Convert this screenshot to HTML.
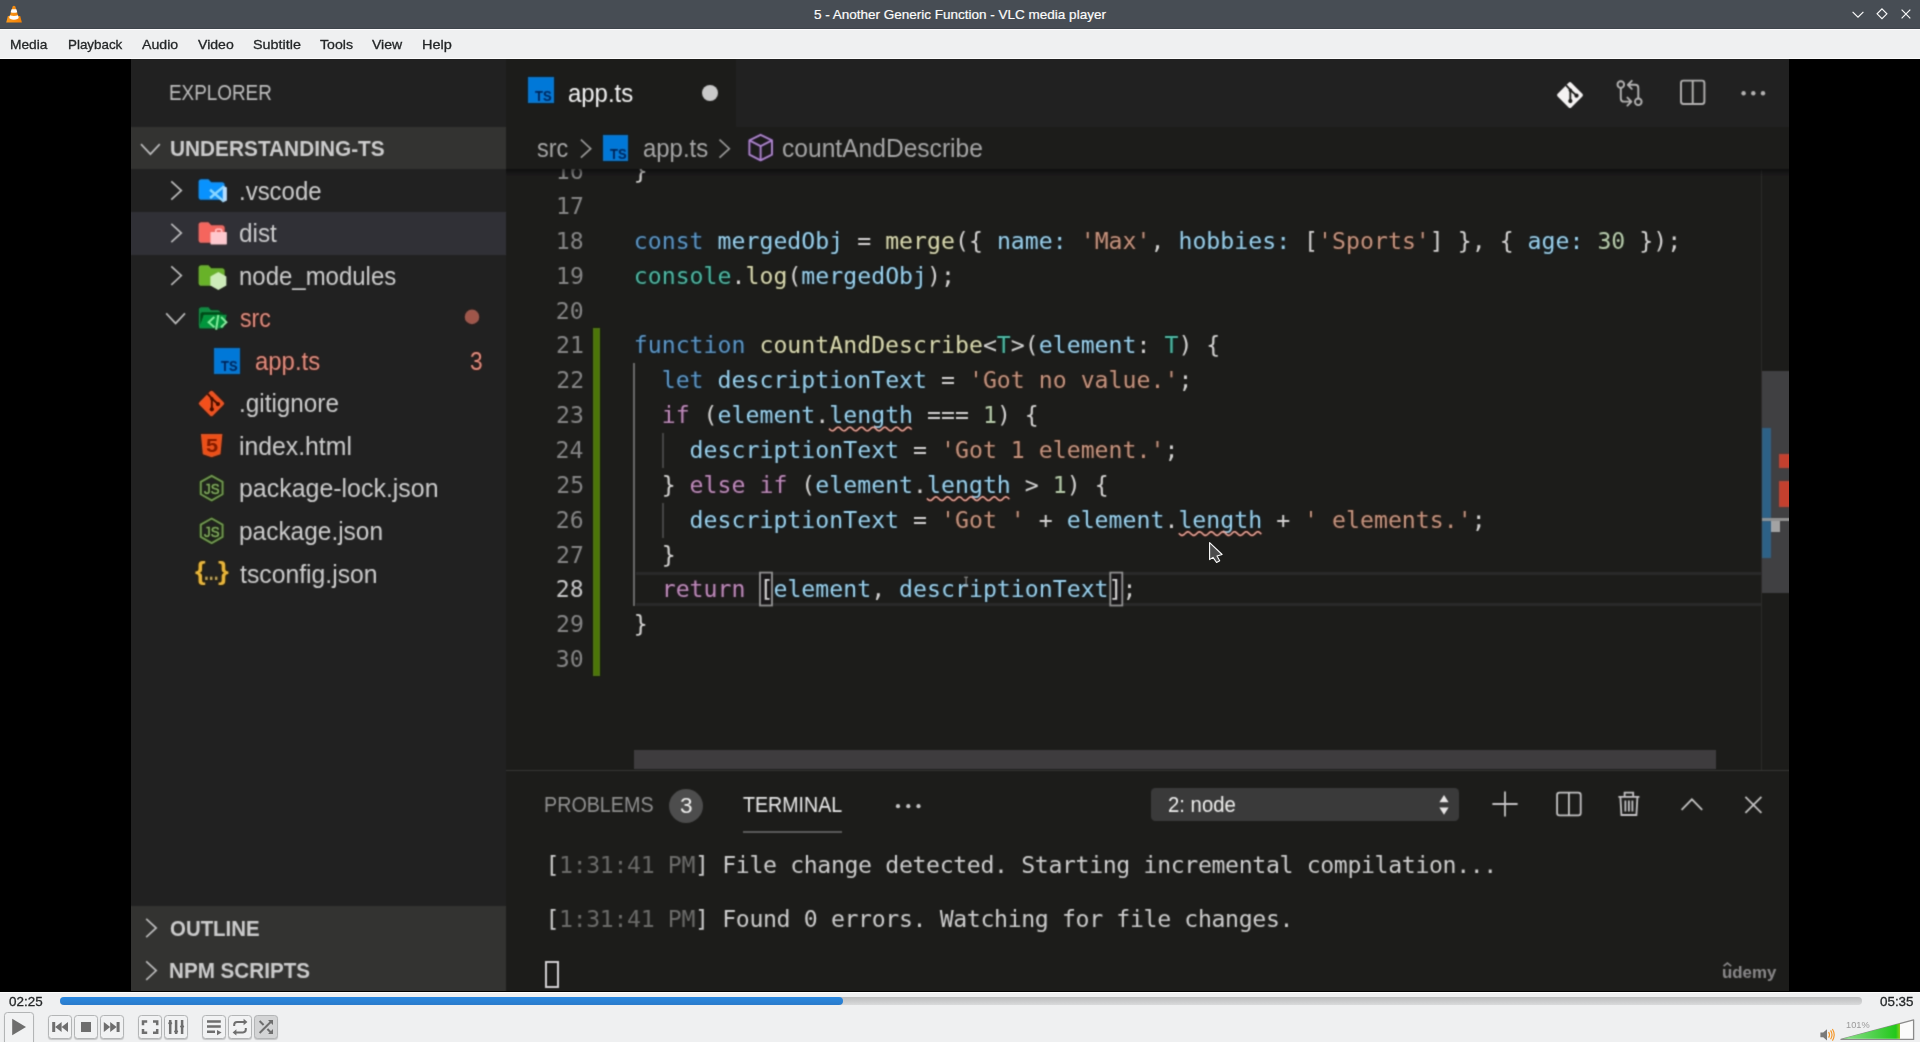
<!DOCTYPE html>
<html lang="en">
<head>
<meta charset="utf-8">
<title>5 - Another Generic Function - VLC media player</title>
<style>
*{box-sizing:border-box;margin:0;padding:0}
html,body{width:1920px;height:1042px;overflow:hidden;background:#000}
body{position:relative;font-family:"Liberation Sans",sans-serif}
.a{position:absolute;white-space:pre;line-height:normal;transform-origin:0 0}
svg{position:absolute;overflow:visible}
.m{font-family:"DejaVu Sans Mono","Liberation Mono",monospace}
.k{color:#5298d2}.c{color:#c586c0}.v{color:#92d3f4}.f{color:#dcdcaa}.s{color:#ce9178}.n{color:#b5cea8}.t{color:#3fbfa6}
.d{color:#6b6b6b}
#vs{filter:url(#vb)}
</style>
</head>
<body>
<!-- VLC title bar -->
<div class="a" style="left:0px;top:0px;width:1920px;height:29px;background:#474d54;border-bottom:1px solid #3f454c"></div>
<svg style="left:0px;top:0px" width="30" height="29" viewBox="0 0 30 29"><defs><linearGradient id="cg" x1="0" x2="1" y1="0" y2="0"><stop offset="0" stop-color="#fb9a1c"/><stop offset="1" stop-color="#f17e04"/></linearGradient></defs><path d="M12.7 6.3 Q13.95 5.1 15.2 6.3 L18.2 16.1 H20.2 L21.9 22.5 H6.2 L7.9 16.1 H9.8 Z" fill="url(#cg)"/><path d="M11.6 9.3 H16.3 L17.3 12.2 Q13.95 13.300 10.600 12.200 Z" fill="#fbfbfb"/><path d="M9.900 15.300 Q13.950 16.800 18 15.300 L18.700 17.500 Q18.300 19.600 13.950 19.700 Q9.600 19.600 9.200 17.500 Z" fill="#fbfbfb"/></svg>
<div class="a" style="left:814.0px;top:7.2px;font-size:13.5px;color:#fcfcfc;-webkit-text-stroke:.2px #fcfcfc;">5 - Another Generic Function - VLC media player</div>
<svg style="left:1848px;top:5px" width="68" height="18" viewBox="1848 5 68 18"><g fill="none" stroke="#fcfcfc" stroke-width="1.15"><path d="M1852.6 11.8 L1858 17.1 L1863.4 11.8"/><path d="M1882 8.9 L1886.9 13.8 L1882 18.7 L1877.1 13.8 Z"/><path d="M1901.6 9.6 L1910.3 18.3 M1910.3 9.6 L1901.6 18.3"/></g></svg>
<!-- VLC menu bar -->
<div class="a" style="left:0px;top:29px;width:1920px;height:30px;background:#eff0f1;border-top:1px solid #fcfcfc;border-bottom:1px solid #fcfcfc"></div>
<div class="a" style="left:9.5px;top:37.4px;font-size:13.5px;color:#232627;transform:scaleX(1.0154);-webkit-text-stroke:.3px #232627;">Media</div>
<div class="a" style="left:67.5px;top:37.4px;font-size:13.5px;color:#232627;transform:scaleX(0.9916);-webkit-text-stroke:.3px #232627;">Playback</div>
<div class="a" style="left:142.0px;top:37.4px;font-size:13.5px;color:#232627;transform:scaleX(1.0471);-webkit-text-stroke:.3px #232627;">Audio</div>
<div class="a" style="left:198.0px;top:37.4px;font-size:13.5px;color:#232627;transform:scaleX(1.0430);-webkit-text-stroke:.3px #232627;">Video</div>
<div class="a" style="left:252.7px;top:37.4px;font-size:13.5px;color:#232627;transform:scaleX(1.0629);-webkit-text-stroke:.3px #232627;">Subtitle</div>
<div class="a" style="left:319.7px;top:37.4px;font-size:13.5px;color:#232627;transform:scaleX(1.0472);-webkit-text-stroke:.3px #232627;">Tools</div>
<div class="a" style="left:372.0px;top:37.4px;font-size:13.5px;color:#232627;transform:scaleX(1.0414);-webkit-text-stroke:.3px #232627;">View</div>
<div class="a" style="left:421.7px;top:37.4px;font-size:13.5px;color:#232627;transform:scaleX(1.0743);-webkit-text-stroke:.3px #232627;">Help</div>
<!-- video frame (VS Code recording) -->
<svg width="0" height="0" style="left:0;top:0"><filter id="vb" x="0" y="0" width="100%" height="100%" color-interpolation-filters="sRGB"><feColorMatrix in="SourceGraphic" type="matrix" values="0.299 0.587 0.114 0 0 0.299 0.587 0.114 0 0 0.299 0.587 0.114 0 0 0 0 0 1 0" result="y"/><feConvolveMatrix in="y" order="3" kernelMatrix="1 3 1 3 9 3 1 3 1" edgeMode="duplicate" preserveAlpha="true" result="yb"/><feColorMatrix in="SourceGraphic" type="matrix" values="0.3505 -0.2935 -0.0570 0 0.5 -0.1495 0.2065 -0.0570 0 0.5 -0.1495 -0.2935 0.4430 0 0.5 0 0 0 1 0" result="c"/><feConvolveMatrix in="c" order="5" kernelMatrix="1 4 6 4 1 4 16 24 16 4 6 24 36 24 6 4 16 24 16 4 1 4 6 4 1" edgeMode="duplicate" preserveAlpha="true" result="cb"/><feComposite in="yb" in2="cb" operator="arithmetic" k1="0" k2="1" k3="2" k4="-1.00392"/></filter></svg>
<div id="vs" class="a" style="left:131px;top:59px;width:1658px;height:932px;background:#1c1c1c;overflow:hidden">
<div class="a" style="left:-131px;top:-59px;width:1920px;height:1042px">
<!-- sidebar -->
<div class="a" style="left:131px;top:59px;width:375px;height:933px;background:#212121;"></div>
<div class="a" style="left:169.3px;top:81.2px;font-size:21.3px;color:#bdbdbd;transform:scaleX(0.8865);">EXPLORER</div>
<div class="a" style="left:131px;top:127px;width:375px;height:42.2px;background:#333333;"></div>
<svg style="left:0;top:0" width="1" height="1"><path d="M141.0 144.2 L150.4 154.2 L159.8 144.2" fill="none" stroke="#bcbcbc" stroke-width="1.7"/></svg>
<div class="a" style="left:169.8px;top:136.6px;font-size:21.3px;font-weight:bold;color:#cccccc;transform:scaleX(0.9775);">UNDERSTANDING-TS</div>
<div class="a" style="left:131px;top:212px;width:375px;height:43.2px;background:#313137;"></div>
<svg style="left:0;top:0" width="1" height="1"><path d="M171.3 181.3 L181.3 190.5 L171.3 199.7" fill="none" stroke="#bcbcbc" stroke-width="1.7"/></svg>
<svg style="left:196.2px;top:174.475px" width="31" height="31" viewBox="0 0 24 24"><path d="M9.6 4H4c-1.1 0-2 .9-2 2v12c0 1.1.9 2 2 2h16.2c1.1 0 2-.9 2-2V8.3c0-1.1-.9-2-2-2h-8.4z" fill="#0a93ff"/><path d="M20.7 8.9 L23.9 10.4 V20.6 L20.7 22.1 Z" fill="#b9dcff"/><path d="M21.4 9.8 L10.9 18.6 M21.4 21.2 L10.9 12.2" fill="none" stroke="#8fd6ff" stroke-width="1.9"/></svg>
<div class="a" style="left:239.1px;top:176.5px;font-size:25.2px;color:#cccccc;transform:scaleX(0.9509);">.vscode</div>
<svg style="left:0;top:0" width="1" height="1"><path d="M171.3 223.8 L181.3 233.0 L171.3 242.2" fill="none" stroke="#bcbcbc" stroke-width="1.7"/></svg>
<svg style="left:196.2px;top:217.025px" width="31" height="31" viewBox="0 0 24 24"><path d="M9.6 4H4c-1.1 0-2 .9-2 2v12c0 1.1.9 2 2 2h16.2c1.1 0 2-.9 2-2V8.3c0-1.1-.9-2-2-2h-8.4z" fill="#f7675f"/><rect x="11.2" y="11.7" width="12.7" height="9.6" rx=".5" fill="#ffc9ce"/><path d="M15.3 11.9 V10.6 c0 -.7 .4 -1.100 1.100 -1.100 h2.400 c.7 0 1.100 .4 1.100 1.100 V11.900" fill="none" stroke="#ffc9ce" stroke-width="1.300"/></svg>
<div class="a" style="left:239.2px;top:219.1px;font-size:25.2px;color:#cccccc;transform:scaleX(0.9658);">dist</div>
<svg style="left:0;top:0" width="1" height="1"><path d="M171.3 266.4 L181.3 275.6 L171.3 284.8" fill="none" stroke="#bcbcbc" stroke-width="1.7"/></svg>
<svg style="left:196.2px;top:259.575px" width="31" height="31" viewBox="0 0 24 24"><path d="M9.6 4H4c-1.1 0-2 .9-2 2v12c0 1.1.9 2 2 2h16.2c1.1 0 2-.9 2-2V8.3c0-1.1-.9-2-2-2h-8.4z" fill="#6ab42a"/><path d="M17.3 9.2 L23.5 12.7 V19.8 L17.300 23.300 L11.100 19.800 V12.700 Z" fill="#ceebba"/></svg>
<div class="a" style="left:238.5px;top:261.6px;font-size:25.2px;color:#cccccc;transform:scaleX(0.9514);">node_modules</div>
<svg style="left:0;top:0" width="1" height="1"><path d="M166.2 313.4 L175.6 323.4 L185.0 313.4" fill="none" stroke="#bcbcbc" stroke-width="1.7"/></svg>
<svg style="left:196.2px;top:302.075px" width="31" height="31" viewBox="0 0 24 24"><path d="M9.6 4H4.2c-1.1 0-2 .9-2 2v12.400c0 1.100 .9 2 2 2h14.500 V8.300 c0-1.100-.9-2-2-2 h-5.100z" fill="#0c8d41"/><path d="M5 8 H20.700 V10 H6.200 L3.400 18 V9.600 c0 -.9 .7 -1.600 1.600 -1.600z" fill="#04481a"/><path d="M6 9.900 H23.800 L21.500 19.200 c-.2 .8 -.8 1.200 -1.600 1.200 H2.400 Z" fill="#02973d"/><g fill="none" stroke="#86e89a" stroke-width="1.600"><path d="M14.200 11.600 L9.800 15.600 L14.200 19.500"/><path d="M19.400 11.600 L23.500 15.600 L19.400 19.500"/><path d="M17.300 9.900 L15.600 21.500"/></g></svg>
<div class="a" style="left:239.5px;top:304.2px;font-size:25.2px;color:#f08675;transform:scaleX(0.9178);">src</div>
<svg style="left:0;top:0" width="1" height="1"><circle cx="472" cy="316.9" r="7.3" fill="#a1574b"/></svg>
<div class="a" style="left:214.4px;top:347.65px;width:25.5px;height:26.4px;background:#0079d8;"></div><div class="a" style="left:221.3px;top:358.1px;font-size:14.4px;font-weight:bold;color:#04234f;transform:scale(0.8971,0.9659);">TS</div>
<div class="a" style="left:254.7px;top:346.7px;font-size:25.2px;color:#f08675;transform:scaleX(0.9498);">app.ts</div>
<div class="a" style="left:469.9px;top:346.7px;font-size:25.2px;color:#f08675;transform:scaleX(0.9000);">3</div>
<svg style="left:0;top:0" width="1" height="1"><g transform="translate(211.5 403.5) scale(1.108)"><rect x="-8.6" y="-8.6" width="17.2" height="17.2" rx="1.7" transform="rotate(45)" fill="#f4501c"/><g fill="#3a1206"><circle cx="0.3" cy="-4.3" r="1.5"/><circle cx="0.3" cy="5.3" r="1.9"/><circle cx="5.8" cy="0.5" r="1.9"/></g><path d="M-3.6 -8.8 L0.300 -4.600 V5.300 M0.500 -4.300 L5.800 0.500" fill="none" stroke="#3a1206" stroke-width="1.700"/></g></svg>
<div class="a" style="left:239.2px;top:389.3px;font-size:25.2px;color:#cccccc;transform:scaleX(0.9646);">.gitignore</div>
<svg style="left:0;top:0" width="1" height="1"><path d="M200.900 433.900 H222.400 L220.500 454.300 L211.650 457.300 L202.800 454.300 Z" fill="#ee5018"/></svg>
<div class="a" style="left:206.0px;top:435.9px;font-size:18px;font-weight:bold;color:#7c1c02;transform:scale(1.2111,1.0039);">5</div>
<div class="a" style="left:238.5px;top:431.8px;font-size:25.2px;color:#cccccc;transform:scaleX(0.9834);">index.html</div>
<svg style="left:0;top:0" width="1" height="1"><path d="M211.65 475.8 L222.55 481.95000000000005 V494.25 L211.65 500.40000000000003 L200.75 494.25 V481.95000000000005 Z" fill="none" stroke="#6c9f43" stroke-width="2" stroke-linejoin="round"/></svg><div class="a" style="left:204.2px;top:480.3px;font-size:15px;color:#7db54e;transform:scale(0.8909,1.0233);-webkit-text-stroke:.45px #7db54e;">JS</div>
<div class="a" style="left:238.5px;top:474.4px;font-size:25.2px;color:#cccccc;transform:scaleX(0.9897);">package-lock.json</div>
<svg style="left:0;top:0" width="1" height="1"><path d="M211.65 518.5 L222.55 524.65 V536.9499999999999 L211.65 543.0999999999999 L200.75 536.9499999999999 V524.65 Z" fill="none" stroke="#6c9f43" stroke-width="2" stroke-linejoin="round"/></svg><div class="a" style="left:204.2px;top:523.0px;font-size:15px;color:#7db54e;transform:scale(0.8909,1.0233);-webkit-text-stroke:.45px #7db54e;">JS</div>
<div class="a" style="left:238.5px;top:516.9px;font-size:25.2px;color:#cccccc;transform:scaleX(0.9703);">package.json</div>
<div class="a" style="left:195.3px;top:557.2px;font-size:25px;font-weight:bold;color:#ecb52c;transform:scale(1.1086,1.0000);">{</div>
<div class="a" style="left:217.5px;top:557.2px;font-size:25px;font-weight:bold;color:#ecb52c;transform:scale(1.1086,1.0000);">}</div>
<div class="a" style="left:204.3px;top:559.3px;font-size:14px;font-weight:bold;color:#c3a042;transform:scale(1.2513,1.6000);">...</div>
<div class="a" style="left:240.0px;top:559.5px;font-size:25.2px;color:#cccccc;transform:scaleX(0.9830);">tsconfig.json</div>
<div class="a" style="left:131px;top:906.3px;width:375px;height:86px;background:#333333;"></div>
<svg style="left:0;top:0" width="1" height="1"><path d="M146.2 918.8 L156.2 928.0 L146.2 937.2" fill="none" stroke="#bcbcbc" stroke-width="1.7"/></svg>
<div class="a" style="left:169.9px;top:916.6px;font-size:21.3px;font-weight:bold;color:#cccccc;transform:scaleX(0.9587);">OUTLINE</div>
<svg style="left:0;top:0" width="1" height="1"><path d="M146.2 961.4 L156.2 970.6 L146.2 979.8" fill="none" stroke="#bcbcbc" stroke-width="1.7"/></svg>
<div class="a" style="left:169.1px;top:959.2px;font-size:21.3px;font-weight:bold;color:#cccccc;transform:scaleX(0.9689);">NPM SCRIPTS</div>
<!-- editor: code -->
<div class="a" style="left:593.4px;top:327.6px;width:6.3px;height:348px;background:#4d7709;"></div>
<div class="a" style="left:633.3px;top:362.6px;width:1.9px;height:243.6px;background:#6a6a6a;"></div>
<div class="a" style="left:662px;top:433.1px;width:1.7px;height:34.85px;background:#454545;"></div>
<div class="a" style="left:662px;top:503.1px;width:1.7px;height:34.85px;background:#454545;"></div>
<div class="a" style="left:636px;top:572.3px;width:1126px;height:2.4px;background:#292929;"></div>
<div class="a" style="left:636px;top:603.4px;width:1126px;height:2.4px;background:#292929;"></div>
<svg style="left:0;top:0" width="1" height="1"><rect x="760.0" y="572.6" width="12.0" height="32.9" fill="#191919" stroke="#949494" stroke-width="1.8"/></svg>
<svg style="left:0;top:0" width="1" height="1"><rect x="1110.3000000000002" y="572.6" width="12.0" height="32.9" fill="#191919" stroke="#949494" stroke-width="1.8"/></svg>
<div class="a m" style="left:555.70px;top:157.30px;font-size:23.17px;color:#858585">16</div>
<div class="a m" style="left:555.95px;top:192.30px;font-size:23.17px;color:#858585">17</div>
<div class="a m" style="left:555.70px;top:227.30px;font-size:23.17px;color:#858585">18</div>
<div class="a m" style="left:555.95px;top:262.30px;font-size:23.17px;color:#858585">19</div>
<div class="a m" style="left:555.70px;top:297.30px;font-size:23.17px;color:#858585">20</div>
<div class="a m" style="left:555.95px;top:331.30px;font-size:23.17px;color:#858585">21</div>
<div class="a m" style="left:556.20px;top:366.30px;font-size:23.17px;color:#858585">22</div>
<div class="a m" style="left:555.95px;top:401.30px;font-size:23.17px;color:#858585">23</div>
<div class="a m" style="left:555.45px;top:436.30px;font-size:23.17px;color:#858585">24</div>
<div class="a m" style="left:556.20px;top:471.30px;font-size:23.17px;color:#858585">25</div>
<div class="a m" style="left:555.70px;top:506.30px;font-size:23.17px;color:#858585">26</div>
<div class="a m" style="left:555.95px;top:541.30px;font-size:23.17px;color:#858585">27</div>
<div class="a m" style="left:555.70px;top:575.30px;font-size:23.17px;color:#c6c6c6">28</div>
<div class="a m" style="left:555.95px;top:610.30px;font-size:23.17px;color:#858585">29</div>
<div class="a m" style="left:555.70px;top:645.30px;font-size:23.17px;color:#858585">30</div>
<div class="a m" style="left:633.75px;top:157.30px;font-size:23.17px;letter-spacing:0.023px;color:#d4d4d4">}</div>
<div class="a m" style="left:633.75px;top:227.30px;font-size:23.17px;letter-spacing:0.023px;color:#d4d4d4"><span class="k">const</span> <span class="v">mergedObj</span> = <span class="f">merge</span>({ <span class="v">name:</span> <span class="s">'Max'</span>, <span class="v">hobbies:</span> [<span class="s">'Sports'</span>] }, { <span class="v">age:</span> <span class="n">30</span> });</div>
<div class="a m" style="left:633.75px;top:262.30px;font-size:23.17px;letter-spacing:0.023px;color:#d4d4d4"><span class="t">console</span>.<span class="f">log</span>(<span class="v">mergedObj</span>);</div>
<div class="a m" style="left:633.75px;top:331.30px;font-size:23.17px;letter-spacing:0.023px;color:#d4d4d4"><span class="k">function</span> <span class="f">countAndDescribe</span>&lt;<span class="t">T</span>&gt;(<span class="v">element</span>: <span class="t">T</span>) {</div>
<div class="a m" style="left:633.75px;top:366.30px;font-size:23.17px;letter-spacing:0.023px;color:#d4d4d4">  <span class="k">let</span> <span class="v">descriptionText</span> = <span class="s">'Got no value.'</span>;</div>
<div class="a m" style="left:633.75px;top:401.30px;font-size:23.17px;letter-spacing:0.023px;color:#d4d4d4">  <span class="c">if</span> (<span class="v">element</span>.<span class="v">length</span> === <span class="n">1</span>) {</div>
<div class="a m" style="left:633.75px;top:436.30px;font-size:23.17px;letter-spacing:0.023px;color:#d4d4d4">    <span class="v">descriptionText</span> = <span class="s">'Got 1 element.'</span>;</div>
<div class="a m" style="left:633.75px;top:471.30px;font-size:23.17px;letter-spacing:0.023px;color:#d4d4d4">  } <span class="c">else</span> <span class="c">if</span> (<span class="v">element</span>.<span class="v">length</span> &gt; <span class="n">1</span>) {</div>
<div class="a m" style="left:633.75px;top:506.30px;font-size:23.17px;letter-spacing:0.023px;color:#d4d4d4">    <span class="v">descriptionText</span> = <span class="s">'Got '</span> + <span class="v">element</span>.<span class="v">length</span> + <span class="s">' elements.'</span>;</div>
<div class="a m" style="left:633.75px;top:541.30px;font-size:23.17px;letter-spacing:0.023px;color:#d4d4d4">  }</div>
<div class="a m" style="left:633.75px;top:575.30px;font-size:23.17px;letter-spacing:0.023px;color:#d4d4d4">  <span class="c">return</span> [<span class="v">element</span>, <span class="v">descriptionText</span>];</div>
<div class="a m" style="left:633.75px;top:610.30px;font-size:23.17px;letter-spacing:0.023px;color:#d4d4d4">}</div>
<svg style="left:0;top:0" width="1" height="1"><path d="M829.1 428.65 L830.1 429.60 L831.0 430.39 L832.0 430.82 L833.0 430.75 L834.0 430.22 L834.9 429.36 L835.9 428.41 L836.9 427.61 L837.8 427.19 L838.8 427.25 L839.8 427.77 L840.7 428.63 L841.7 429.58 L842.7 430.38 L843.7 430.81 L844.6 430.76 L845.6 430.23 L846.6 429.38 L847.5 428.43 L848.5 427.62 L849.5 427.19 L850.4 427.24 L851.4 427.76 L852.4 428.61 L853.4 429.56 L854.3 430.37 L855.3 430.81 L856.3 430.76 L857.2 430.25 L858.2 429.40 L859.2 428.45 L860.1 427.64 L861.1 427.19 L862.1 427.23 L863.1 427.74 L864.0 428.59 L865.0 429.55 L866.0 430.35 L866.9 430.80 L867.9 430.77 L868.9 430.26 L869.8 429.42 L870.8 428.46 L871.8 427.65 L872.8 427.20 L873.7 427.23 L874.7 427.73 L875.7 428.57 L876.6 429.53 L877.6 430.34 L878.6 430.80 L879.5 430.78 L880.5 430.28 L881.5 429.44 L882.5 428.48 L883.4 427.67 L884.4 427.20 L885.4 427.22 L886.3 427.71 L887.3 428.55 L888.3 429.51 L889.2 430.33 L890.2 430.79 L891.2 430.78 L892.2 430.29 L893.1 429.46 L894.1 428.50 L895.1 427.68 L896.0 427.21 L897.0 427.22 L898.0 427.70 L898.9 428.53 L899.9 429.49 L900.9 430.31 L901.9 430.79 L902.8 430.79 L903.8 430.31 L904.8 429.48 L905.7 428.52 L906.7 427.69 L907.7 427.21 L908.6 427.21 L909.6 427.69 L910.6 428.51 L911.6 429.47" fill="none" stroke="#ffa08f" stroke-width="1.6" stroke-linejoin="round"/></svg>
<svg style="left:0;top:0" width="1" height="1"><path d="M926.9 498.35 L927.9 499.30 L928.8 500.09 L929.8 500.52 L930.8 500.45 L931.8 499.92 L932.7 499.06 L933.7 498.11 L934.7 497.31 L935.6 496.89 L936.6 496.95 L937.6 497.47 L938.5 498.33 L939.5 499.28 L940.5 500.08 L941.5 500.51 L942.4 500.46 L943.4 499.93 L944.4 499.08 L945.3 498.13 L946.3 497.32 L947.3 496.89 L948.2 496.94 L949.2 497.46 L950.2 498.31 L951.2 499.26 L952.1 500.07 L953.1 500.51 L954.1 500.46 L955.0 499.95 L956.0 499.10 L957.0 498.15 L957.9 497.34 L958.9 496.89 L959.9 496.93 L960.9 497.44 L961.8 498.29 L962.8 499.25 L963.8 500.05 L964.7 500.50 L965.7 500.47 L966.7 499.96 L967.6 499.12 L968.6 498.16 L969.6 497.35 L970.6 496.90 L971.5 496.93 L972.5 497.43 L973.5 498.27 L974.4 499.23 L975.4 500.04 L976.4 500.50 L977.3 500.48 L978.3 499.98 L979.3 499.14 L980.3 498.18 L981.2 497.37 L982.2 496.90 L983.2 496.92 L984.1 497.41 L985.1 498.25 L986.1 499.21 L987.0 500.03 L988.0 500.49 L989.0 500.48 L990.0 499.99 L990.9 499.16 L991.9 498.20 L992.9 497.38 L993.8 496.91 L994.8 496.92 L995.8 497.40 L996.7 498.23 L997.7 499.19 L998.7 500.01 L999.7 500.49 L1000.6 500.49 L1001.6 500.01 L1002.6 499.18 L1003.5 498.22 L1004.5 497.39 L1005.5 496.91 L1006.4 496.91 L1007.4 497.39 L1008.4 498.21 L1009.4 499.17" fill="none" stroke="#ffa08f" stroke-width="1.6" stroke-linejoin="round"/></svg>
<svg style="left:0;top:0" width="1" height="1"><path d="M1178.8 533.25 L1179.8 534.20 L1180.7 534.99 L1181.7 535.42 L1182.7 535.35 L1183.7 534.82 L1184.6 533.96 L1185.6 533.01 L1186.6 532.21 L1187.5 531.79 L1188.5 531.85 L1189.5 532.37 L1190.4 533.23 L1191.4 534.18 L1192.4 534.98 L1193.4 535.41 L1194.3 535.36 L1195.3 534.83 L1196.3 533.98 L1197.2 533.03 L1198.2 532.22 L1199.2 531.79 L1200.1 531.84 L1201.1 532.36 L1202.1 533.21 L1203.1 534.16 L1204.0 534.97 L1205.0 535.41 L1206.0 535.36 L1206.9 534.85 L1207.9 534.00 L1208.9 533.05 L1209.8 532.24 L1210.8 531.79 L1211.8 531.83 L1212.8 532.34 L1213.7 533.19 L1214.7 534.15 L1215.7 534.95 L1216.6 535.40 L1217.6 535.37 L1218.6 534.86 L1219.5 534.02 L1220.5 533.06 L1221.5 532.25 L1222.5 531.80 L1223.4 531.83 L1224.4 532.33 L1225.4 533.17 L1226.3 534.13 L1227.3 534.94 L1228.3 535.40 L1229.2 535.38 L1230.2 534.88 L1231.2 534.04 L1232.2 533.08 L1233.1 532.27 L1234.1 531.80 L1235.1 531.82 L1236.0 532.31 L1237.0 533.15 L1238.0 534.11 L1238.9 534.93 L1239.9 535.39 L1240.9 535.38 L1241.9 534.89 L1242.8 534.06 L1243.8 533.10 L1244.8 532.28 L1245.7 531.81 L1246.7 531.82 L1247.7 532.30 L1248.6 533.13 L1249.6 534.09 L1250.6 534.91 L1251.6 535.39 L1252.5 535.39 L1253.5 534.91 L1254.5 534.08 L1255.4 533.12 L1256.4 532.29 L1257.4 531.81 L1258.3 531.81 L1259.3 532.29 L1260.3 533.11 L1261.3 534.07" fill="none" stroke="#ffa08f" stroke-width="1.6" stroke-linejoin="round"/></svg>
<div class="a" style="left:1761.4px;top:170px;width:1px;height:600px;background:#2b2b2b;"></div>
<div class="a" style="left:1761.8px;top:370.5px;width:27.2px;height:222.3px;background:#424242;"></div>
<div class="a" style="left:1761.9px;top:428.4px;width:9.4px;height:130px;background:#2f6289;"></div>
<div class="a" style="left:1779.4px;top:454.4px;width:9.6px;height:14px;background:#c5402f;"></div>
<div class="a" style="left:1779.4px;top:480.5px;width:9.6px;height:26.3px;background:#c5402f;"></div>
<div class="a" style="left:1761.9px;top:517.8px;width:27.1px;height:3.6px;background:#8f8f8f;"></div>
<div class="a" style="left:1770.7px;top:521px;width:9.2px;height:11.4px;background:#a3a3a3;"></div>
<div class="a" style="left:633.6px;top:750px;width:1082.8px;height:19.4px;background:#3e3e3e;"></div>
<svg style="left:0;top:0" width="1" height="1"><path d="M964.2 577.2 H968 M966.1 577.2 V586.4 M964.2 586.4 H968" fill="none" stroke="#9a9a9a" stroke-width="1"/></svg>
<!-- editor: tabs -->
<div class="a" style="left:506px;top:59px;width:1283px;height:68px;background:#212121;"></div>
<div class="a" style="left:506px;top:59px;width:229.8px;height:68px;background:#1c1c1c;"></div>
<div class="a" style="left:527.9px;top:77.3px;width:25.7px;height:26px;background:#0079d8;"></div><div class="a" style="left:534.8px;top:87.8px;font-size:14.4px;font-weight:bold;color:#04234f;transform:scale(0.9042,0.9734);">TS</div>
<div class="a" style="left:567.8px;top:79.3px;font-size:25.2px;color:#f2f2f2;transform:scaleX(0.9498);">app.ts</div>
<div class="a" style="left:702px;top:84.8px;width:16.2px;height:16.2px;border-radius:50%;background:#c9c9c9"></div>
<svg style="left:0;top:0" width="1" height="1"><g transform="translate(1570.0 95.1) scale(1.125)"><rect x="-8.6" y="-8.6" width="17.2" height="17.2" rx="1.7" transform="rotate(45)" fill="#f4f4f4"/><g fill="#1c1c1c"><circle cx="0.3" cy="-4.3" r="1.5"/><circle cx="0.3" cy="5.3" r="1.9"/><circle cx="5.8" cy="0.5" r="1.9"/></g><path d="M-3.6 -8.8 L0.300 -4.600 V5.300 M0.500 -4.300 L5.800 0.500" fill="none" stroke="#1c1c1c" stroke-width="1.700"/></g></svg>
<svg style="left:1614px;top:78px" width="30" height="30" viewBox="1614 78 30 30"><g fill="none" stroke="#b4b4b4" stroke-width="1.9" stroke-linejoin="round" stroke-linecap="round"><circle cx="1620.8" cy="84.6" r="3.3"/><circle cx="1638.3" cy="101.8" r="3.3"/><path d="M1620.8 88 V98.4 c0 2 1 3.200 3.200 3.200 H1630.600 M1627.400 97.600 L1631.400 101.600 L1627.400 105.600"/><path d="M1638.300 98.400 V88 c0 -2 -1 -3.200 -3.200 -3.200 H1628.400 M1631.800 80.800 L1627.800 84.800 L1631.800 88.800"/></g></svg>
<svg style="left:1678px;top:78px" width="30" height="30" viewBox="1678 78 30 30"><g fill="none" stroke="#b4b4b4" stroke-width="1.9"><rect x="1681" y="80.600" width="23.400" height="23.400" rx="2.400"/><path d="M1692.700 80.600 V104"/></g></svg>
<svg style="left:1740px;top:88px" width="30" height="10" viewBox="1740 88 30 10"><g fill="#b4b4b4"><circle cx="1743.600" cy="93.300" r="2.200"/><circle cx="1753.300" cy="93.300" r="2.200"/><circle cx="1763" cy="93.300" r="2.200"/></g></svg>
<!-- editor: breadcrumbs -->
<div class="a" style="left:506px;top:127px;width:1283px;height:42.2px;background:#1c1c1c;"></div>
<div class="a" style="left:537.4px;top:134.4px;font-size:25.2px;color:#a6a6a6;transform:scaleX(0.9302);">src</div>
<svg style="left:0;top:0" width="1" height="1"><path d="M580.9 139.7 L590.7 148.7 L580.9 157.7" fill="none" stroke="#9a9a9a" stroke-width="1.7"/></svg>
<div class="a" style="left:602.6px;top:135.1px;width:25.7px;height:25.6px;background:#0079d8;"></div><div class="a" style="left:609.5px;top:145.6px;font-size:14.4px;font-weight:bold;color:#04234f;transform:scale(0.9042,0.9734);">TS</div>
<div class="a" style="left:642.8px;top:134.4px;font-size:25.2px;color:#a6a6a6;transform:scaleX(0.9498);">app.ts</div>
<svg style="left:0;top:0" width="1" height="1"><path d="M719.5 139.7 L729.3 148.7 L719.5 157.7" fill="none" stroke="#9a9a9a" stroke-width="1.7"/></svg>
<svg style="left:746px;top:132px" width="30" height="32" viewBox="746 132 30 32"><g fill="none" stroke="#b180d7" stroke-width="1.9" stroke-linejoin="round"><path d="M760.600 134.800 L772 140.400 V154.600 L760.600 160.400 L749.400 154.600 V140.400 Z"/><path d="M749.400 140.400 L760.600 146.200 L772 140.400 M760.600 146.200 V160.400"/></g></svg>
<div class="a" style="left:781.5px;top:134.4px;font-size:25.2px;color:#a6a6a6;transform:scaleX(0.9762);">countAndDescribe</div>
<div class="a" style="left:506px;top:169.2px;width:1283px;height:7px;background:linear-gradient(#00000080,#00000000)"></div>
<!-- panel: terminal -->
<div class="a" style="left:506px;top:769.6px;width:1283px;height:1.6px;background:#353535;"></div>
<div class="a" style="left:544.0px;top:793.4px;font-size:21.3px;color:#8f8f8f;transform:scaleX(0.9255);">PROBLEMS</div>
<div class="a" style="left:668.600px;top:788.600px;width:34.800px;height:34.800px;border-radius:50%;background:#4d4d4d"></div>
<div class="a" style="left:680.0px;top:793.7px;font-size:21.3px;color:#f0f0f0;transform:scaleX(1.0634);">3</div>
<div class="a" style="left:743.2px;top:793.4px;font-size:21.3px;color:#e7e7e7;transform:scaleX(0.9211);">TERMINAL</div>
<div class="a" style="left:742.7px;top:830.6px;width:99.8px;height:2px;background:#5a5a5a;"></div>
<svg style="left:894px;top:802px" width="30" height="8" viewBox="894 802 30 8"><g fill="#c5c5c5"><circle cx="898" cy="806.200" r="2.100"/><circle cx="908.300" cy="806.200" r="2.100"/><circle cx="918.500" cy="806.200" r="2.100"/></g></svg>
<div class="a" style="left:1150.500px;top:788.100px;width:308.400px;height:33.200px;border-radius:4.500px;background:#3a3a3a"></div>
<div class="a" style="left:1167.7px;top:791.6px;font-size:22.4px;color:#f0f0f0;transform:scaleX(0.9072);">2: node</div>
<svg style="left:1438px;top:793px" width="12" height="24" viewBox="1438 793 12 24"><path d="M1444 795 L1448.600 802.200 H1439.400 Z M1444 814.800 L1448.600 807.600 H1439.400 Z" fill="#e8e8e8"/></svg>
<svg style="left:1490px;top:788px" width="280" height="32" viewBox="1490 788 280 32"><g fill="none" stroke="#c5c5c5" stroke-width="1.800"><path d="M1505 791.400 V816.600 M1492.400 804 H1517.600"/><rect x="1557.100" y="792.700" width="23.600" height="22.600" rx="2.400"/><path d="M1568.900 792.700 V815.300"/><path d="M1618.400 796.800 H1639.400 M1624.600 796.400 V792.600 H1633.200 V796.400 M1620.400 797 L1621.400 815 H1636.400 L1637.400 797 M1625.400 800.600 V811.600 M1628.900 800.600 V811.600 M1632.400 800.600 V811.600"/><path d="M1681.600 809.800 L1691.900 799.400 L1702.200 809.800"/><path d="M1745.400 796.800 L1761.400 812.800 M1761.400 796.800 L1745.400 812.800"/></g></svg>
<div class="a m" style="left:545.50px;top:851.40px;font-size:23.2px;letter-spacing:-0.368px;color:#cccccc">[<span class="d">1:31:41 PM</span>] File change detected. Starting incremental compilation...</div>
<div class="a m" style="left:545.50px;top:904.90px;font-size:23.2px;letter-spacing:-0.368px;color:#cccccc">[<span class="d">1:31:41 PM</span>] Found 0 errors. Watching for file changes.</div>
<div class="a" style="left:544.500px;top:960.500px;width:14.200px;height:27px;border:2px solid #d2d2d2"></div>
<div class="a" style="left:1722.4px;top:961.8px;font-size:17.4px;font-weight:bold;color:#8a8a8a;transform:scaleX(0.9691);">udemy</div>
<svg style="left:1722px;top:962px" width="12" height="6" viewBox="1722 962 12 6"><path d="M1723.600 966.200 L1727.400 963 L1731.200 966.200" fill="none" stroke="#8a8a8a" stroke-width="1.700"/></svg>
</div></div>
<svg style="left:1208.9px;top:542px" width="14" height="22" viewBox="0 0 14 22"><path d="M0.6 0.7 V17.6 L4.0 15.4 L7.6 20.5 L10.7 18.7 L8.0 14.0 L13.1 12.5 Z" fill="#4d4d4d" stroke="#fcfcfc" stroke-width="1.1" stroke-linejoin="round"/></svg>
<!-- VLC controls -->
<div class="a" style="left:0px;top:992px;width:1920px;height:50px;background:#eff0f1;border-top:1px solid #fcfcfc"></div>
<div class="a" style="left:9.4px;top:993.9px;font-size:13.5px;color:#232627;transform:scaleX(0.9954);-webkit-text-stroke:.3px #232627;">02:25</div>
<div class="a" style="left:1879.6px;top:993.9px;font-size:13.5px;color:#232627;transform:scaleX(0.9924);-webkit-text-stroke:.3px #232627;">05:35</div>
<div class="a" style="left:59.600px;top:996.500px;width:1802.200px;height:8.600px;border-radius:4.300px;background:linear-gradient(#bcbdbe,#d9dadb)"></div>
<div class="a" style="left:59.600px;top:996.500px;width:783.300px;height:8.600px;border-radius:4.300px;background:linear-gradient(#2a88e0,#2a7bcb)"></div>
<div class="a" style="left:4.3px;top:1012.2px;width:29.3px;height:36px;background:#f1f2f3;border:1px solid #b3b5b6;border-radius:3.500px;box-shadow:0 1px 1px #0000002e;"></div>
<div class="a" style="left:48.2px;top:1015.2px;width:23.5px;height:23.5px;background:#f1f2f3;border:1px solid #b3b5b6;border-radius:3.500px;box-shadow:0 1px 1px #0000002e;"></div>
<div class="a" style="left:74.3px;top:1015.2px;width:23.5px;height:23.5px;background:#f1f2f3;border:1px solid #b3b5b6;border-radius:3.500px;box-shadow:0 1px 1px #0000002e;"></div>
<div class="a" style="left:100.3px;top:1015.2px;width:23.5px;height:23.5px;background:#f1f2f3;border:1px solid #b3b5b6;border-radius:3.500px;box-shadow:0 1px 1px #0000002e;"></div>
<div class="a" style="left:138.2px;top:1015.2px;width:23.5px;height:23.5px;background:#f1f2f3;border:1px solid #b3b5b6;border-radius:3.500px;box-shadow:0 1px 1px #0000002e;"></div>
<div class="a" style="left:164.3px;top:1015.2px;width:23.5px;height:23.5px;background:#f1f2f3;border:1px solid #b3b5b6;border-radius:3.500px;box-shadow:0 1px 1px #0000002e;"></div>
<div class="a" style="left:202.2px;top:1015.2px;width:23.5px;height:23.5px;background:#f1f2f3;border:1px solid #b3b5b6;border-radius:3.500px;box-shadow:0 1px 1px #0000002e;"></div>
<div class="a" style="left:228.3px;top:1015.2px;width:23.5px;height:23.5px;background:#f1f2f3;border:1px solid #b3b5b6;border-radius:3.500px;box-shadow:0 1px 1px #0000002e;"></div>
<div class="a" style="left:254.3px;top:1015.2px;width:23.5px;height:23.5px;background:#d3d4d5;border:1px solid #b3b5b6;border-radius:3.500px;box-shadow:0 1px 1px #0000002e;"></div>
<svg style="left:0px;top:1012px" width="290" height="30" viewBox="0 1012 290 30"><g fill="#6e6e6e"><path d="M12.200 1018.800 L26 1027 L12.200 1035.200 Z"/><path d="M52.200 1022 H55.200 V1032 H52.200 Z M55.200 1027 L61.600 1022 V1027 L68 1022 V1032 L61.600 1027 V1032 Z"/><path d="M81 1022 H91 V1032 H81 Z"/><path d="M116.600 1022 H119.600 V1032 H116.600 Z M116.600 1027 L110.200 1022 V1027 L103.800 1022 V1032 L110.200 1027 V1032 Z"/></g><g fill="none" stroke="#6e6e6e" stroke-width="2.5"><path d="M143 1025.200 V1021.400 H147.200 M153 1021.400 H157.200 V1025.200 M157.200 1029 V1032.800 H153 M147.200 1032.800 H143 V1029"/><path d="M170.200 1020 V1034 M176.100 1020 V1034 M182.100 1020 V1034"/><path d="M207 1021.400 H220.800 M207 1026.500 H220.800 M207 1031.700 H215"/><path d="M234.200 1026 V1024.800 Q234.200 1022 237 1022 H245 M245.800 1028 V1029.600 Q245.800 1032.400 243 1032.400 H235" stroke-width="2"/><path d="M259.600 1033 L271.400 1021.200 M259.600 1021 L263.600 1025 M267.400 1029 L271.400 1033" stroke-width="2"/></g><g fill="#6e6e6e"><path d="M168 1023.200 L170.200 1020.600 L172.400 1023.200 L170.200 1025.600 Z M173.900 1031.400 L176.100 1029 L178.300 1031.400 L176.100 1034 Z M179.900 1026.400 L182.100 1024 L184.300 1026.400 L182.100 1029 Z"/><path d="M217 1030 L221.600 1032.600 L217 1035.200 Z"/><path d="M243.600 1018.800 L247.400 1022 L243.600 1025.200 Z M236.400 1029.200 L232.600 1032.400 L236.400 1035.600 Z"/><path d="M268 1020 H273 V1025 Z M268 1034 H273 V1029 Z"/></g></svg>
<svg style="left:1818px;top:1016px" width="100" height="26" viewBox="1818 1016 100 26"><defs><linearGradient id="vg" x1="0" x2="1" y1="0" y2="0"><stop offset="0" stop-color="#8ee08a"/><stop offset="0.55" stop-color="#4fd14c"/><stop offset="0.93" stop-color="#22c81a"/><stop offset="1" stop-color="#8fcf1a"/></linearGradient></defs><path d="M1820.400 1032.400 H1823.200 L1827 1029.200 V1040.400 L1823.200 1037.200 H1820.400 Z" fill="#7a7a7a"/><path d="M1828.600 1032 Q1830.400 1034.800 1828.600 1037.600 M1830.600 1030.400 Q1833.400 1034.800 1830.600 1039.200 M1832.400 1029 Q1836 1034.800 1832.400 1040.600" fill="none" stroke="#f5921e" stroke-width="1.100"/><path d="M1841 1039.400 L1913.600 1019.800 V1039.400 Z" fill="#fbfbfb" stroke="#8a8a8a" stroke-width="1.300" stroke-linejoin="round"/><path d="M1842.400 1038.800 L1900 1023.400 V1038.800 Z" fill="url(#vg)"/></svg>
<div class="a" style="left:1845.7px;top:1019.0px;font-size:9.5px;color:#9a9a9a;transform:scaleX(0.9720);">101%</div>
</body>
</html>
